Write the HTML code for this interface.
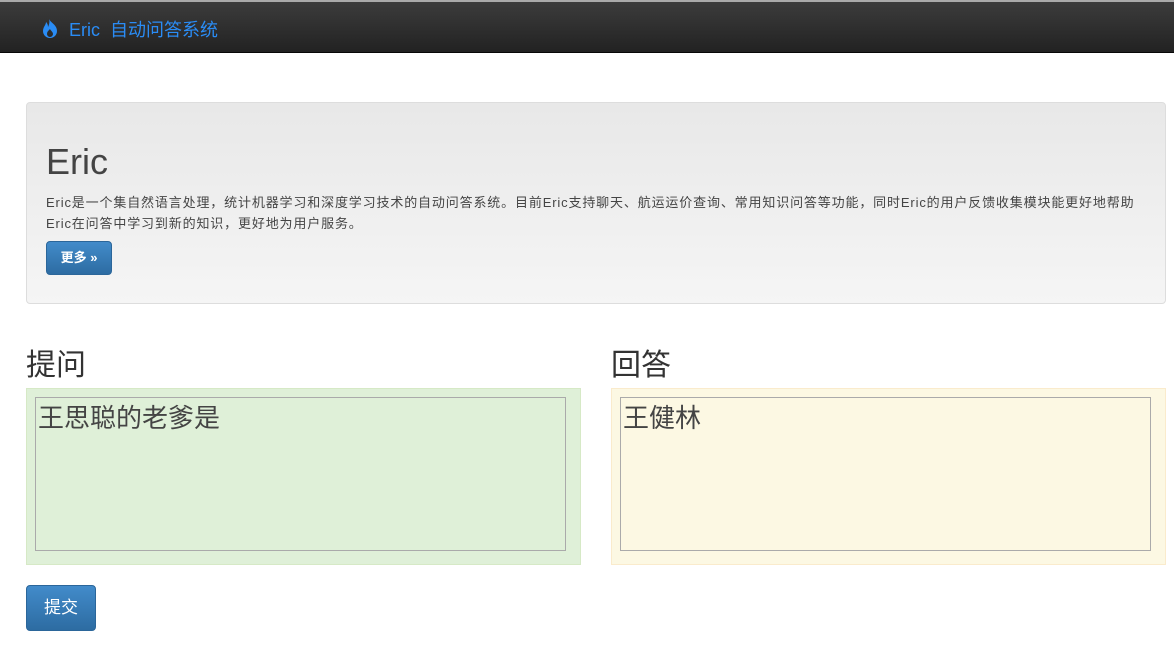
<!DOCTYPE html>
<html><head><meta charset="utf-8"><style>
body{margin:0;width:1174px;height:647px;background:#fff;font-family:"Liberation Sans","Noto Sans CJK SC",sans-serif;color:#333;overflow:hidden;position:relative}
.nav{position:absolute;left:0;top:0;width:1174px;height:53px;background:linear-gradient(#3c3c3c,#222);border-top:2px solid #aaa;box-sizing:border-box;border-bottom:1px solid #080808}
.brand{position:absolute;left:41px;top:14px;color:#2a8cf5;font-size:18px;display:flex;align-items:center}
.jumbo{position:absolute;left:26px;top:102px;width:1140px;height:202px;border:1px solid #ddd;border-radius:4px;background:linear-gradient(#e8e8e8,#f5f5f5);box-sizing:border-box}
.btn{position:absolute;background:linear-gradient(#428bca,#2d6ca2);border:1px solid #2b669a;border-radius:4px;color:#fff;box-sizing:border-box;text-align:center}
h2{position:absolute;margin:0;font-weight:normal;font-size:30px;color:#333}
.box{position:absolute;top:388px;width:555px;height:177px;box-sizing:border-box;border:1px solid}
.ta{position:absolute;left:8px;top:8px;width:531px;height:154px;border:1px solid #aaa;box-sizing:border-box;font-size:26px;padding:3px 2px;color:#444;line-height:34px}
</style></head><body>
<div class="nav"><div class="brand"><svg width="18" height="20" viewBox="0 0 18 20"><path d="M8 0C10 4 16 6 16 12a7 7 0 0 1-14 0C2 8 5 6 5 3c2 2 2 4 2 5 1-2 2-5 1-8zM9 10c-2 2-3 3-3 5a3 3 0 0 0 6 0c0-2-2-3-3-5z" fill="#2a8cf5" fill-rule="evenodd"/></svg><span style="margin-left:10px">Eric&nbsp; 自动问答系统</span></div></div>
<div class="jumbo">
<div style="position:absolute;left:19px;top:89px;font-size:13px;line-height:21px;color:#444;width:1110px;white-space:nowrap;letter-spacing:0.85px">Eric是一个集自然语言处理，统计机器学习和深度学习技术的自动问答系统。目前Eric支持聊天、航运运价查询、常用知识问答等功能，同时Eric的用户反馈收集模块能更好地帮助<br>Eric在问答中学习到新的知识，更好地为用户服务。</div>
<div style="position:absolute;left:19px;top:38px;font-size:36px;color:#444">Eric</div>
<div class="btn" style="left:19px;top:138px;width:66px;height:34px;line-height:32px;font-size:13px;font-weight:bold">更多 »</div>
</div>
<h2 style="left:26px;top:340px">提问</h2>
<h2 style="left:611px;top:340px">回答</h2>
<div class="box" style="left:26px;background:#dff0d8;border-color:#d6e9c6"><div class="ta">王思聪的老爹是</div></div>
<div class="box" style="left:611px;background:#fcf8e3;border-color:#faebcc"><div class="ta">王健林</div></div>
<div class="btn" style="left:26px;top:585px;width:70px;height:46px;line-height:44px;font-size:17px">提交</div>
</body></html>
